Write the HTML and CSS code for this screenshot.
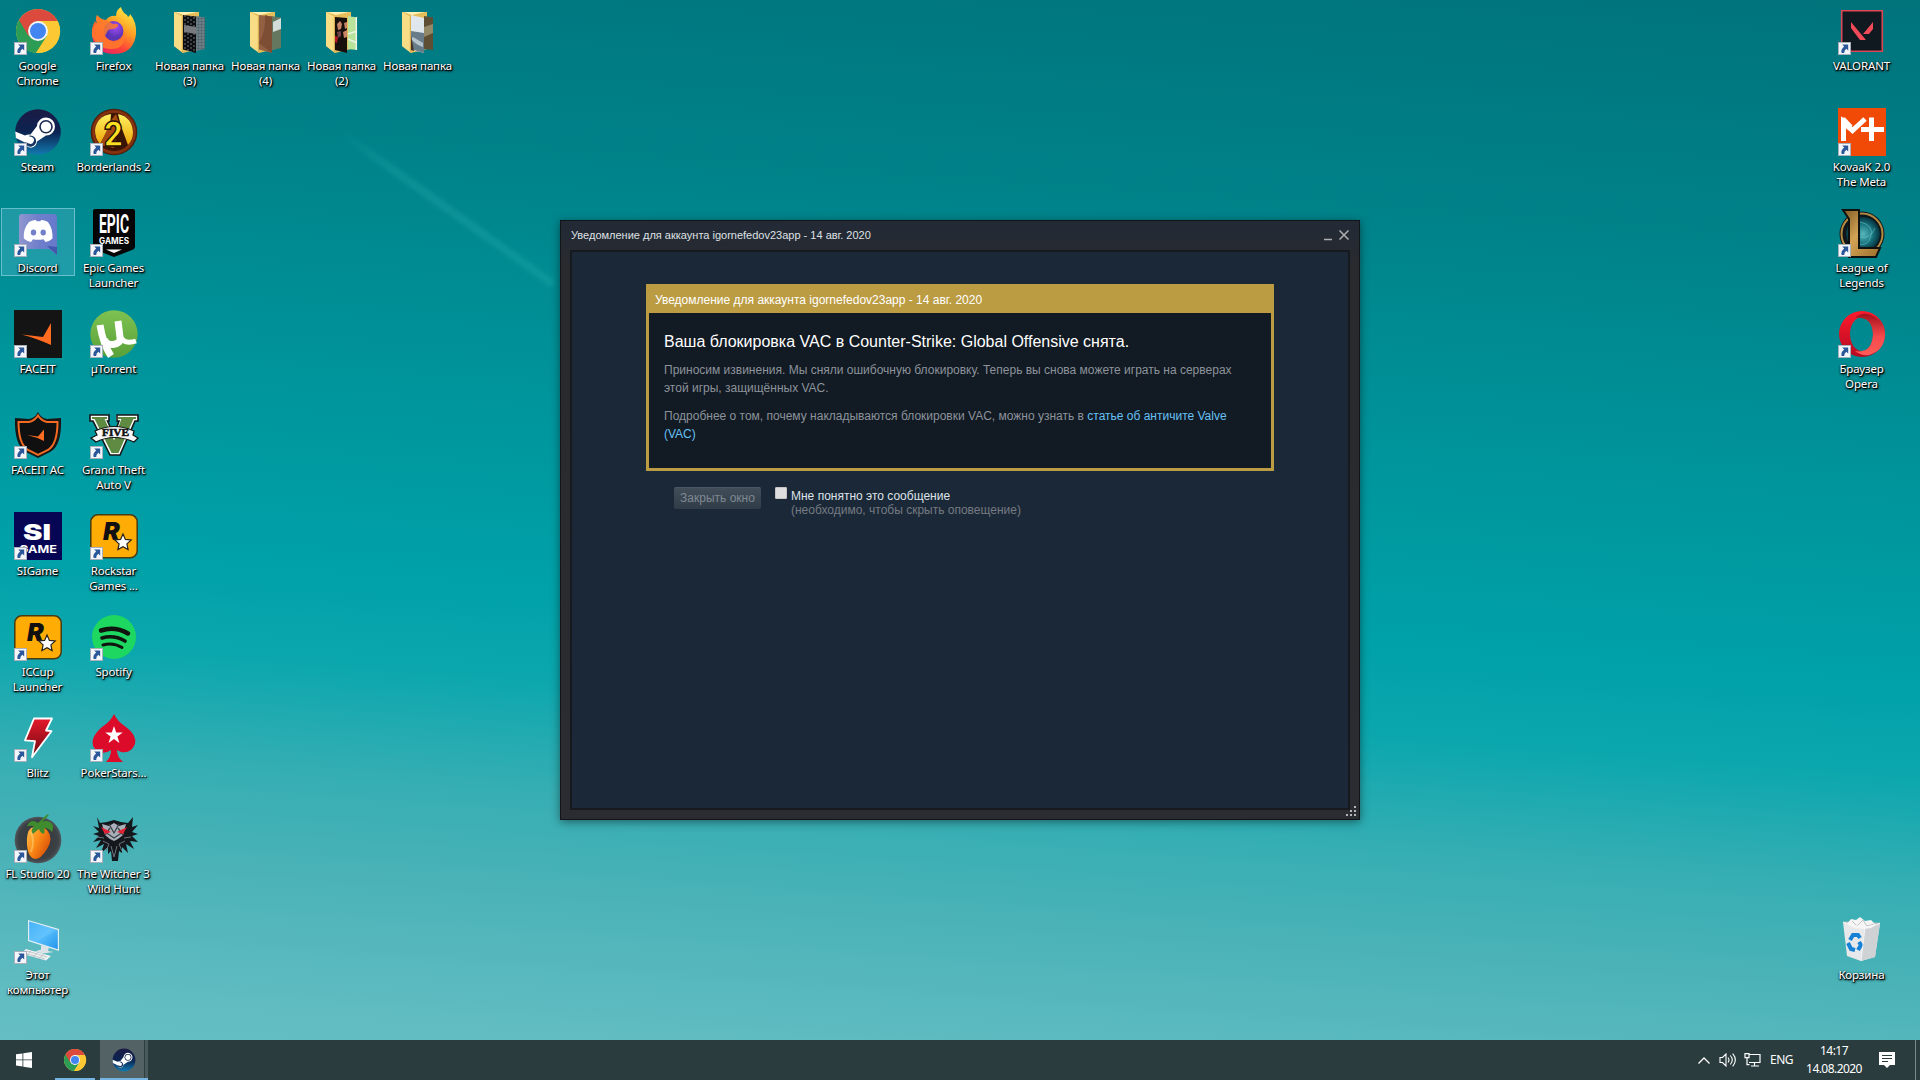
FILE: index.html
```html
<!DOCTYPE html>
<html lang="ru">
<head>
<meta charset="utf-8">
<title>Рабочий стол</title>
<link rel="stylesheet" href="styles.css">
</head>
<body>
<svg class="defs" aria-hidden="true">
  <defs>
    <linearGradient id="steamBg" x1="0" y1="0" x2="0" y2="1"><stop offset="0" stop-color="#1b1b45"/><stop offset=".5" stop-color="#0b2350"/><stop offset="1" stop-color="#1279b0"/></linearGradient>
    <linearGradient id="ffBody" x1=".8" y1="0" x2=".2" y2="1"><stop offset="0" stop-color="#fff044"/><stop offset=".4" stop-color="#ff9a22"/><stop offset=".7" stop-color="#ff4238"/><stop offset="1" stop-color="#e3206c"/></linearGradient>
    <radialGradient id="ffCore" cx=".6" cy=".3"><stop offset="0" stop-color="#a64bf5"/><stop offset="1" stop-color="#5b35b5"/></radialGradient>
    <linearGradient id="ut" x1="0" y1="0" x2="0" y2="1"><stop offset="0" stop-color="#7ec251"/><stop offset="1" stop-color="#58a039"/></linearGradient>
    <linearGradient id="blitz" x1="0" y1="0" x2="0" y2="1"><stop offset="0" stop-color="#e51a2b"/><stop offset="1" stop-color="#6d0911"/></linearGradient>
    <linearGradient id="fruit" x1="0" y1="0" x2="1" y2=".7"><stop offset="0" stop-color="#ffc04d"/><stop offset=".5" stop-color="#fb8a16"/><stop offset="1" stop-color="#d64d08"/></linearGradient>
    <radialGradient id="flBg"><stop offset="0" stop-color="#30343a"/><stop offset=".85" stop-color="#3c4146"/><stop offset="1" stop-color="#50575c"/></radialGradient>
    <linearGradient id="screen" x1="0" y1="0" x2="1" y2="1"><stop offset="0" stop-color="#2aa5f2"/><stop offset=".5" stop-color="#55bdfb"/><stop offset="1" stop-color="#2595ec"/></linearGradient>
    <linearGradient id="opera" x1="0" y1="0" x2="0" y2="1"><stop offset="0" stop-color="#ff1b2d"/><stop offset="1" stop-color="#b40a22"/></linearGradient>
    <linearGradient id="operaR" x1="0" y1="0" x2="0" y2="1"><stop offset="0" stop-color="#a5101c"/><stop offset=".55" stop-color="#f64a4c"/><stop offset="1" stop-color="#ff5b57"/></linearGradient>
    <linearGradient id="gold" x1="0" y1="0" x2="1" y2="1"><stop offset="0" stop-color="#7e5a24"/><stop offset=".45" stop-color="#d3a254"/><stop offset="1" stop-color="#9b6e2b"/></linearGradient>
    <radialGradient id="orb"><stop offset="0" stop-color="#55b8bc"/><stop offset=".6" stop-color="#17717c"/><stop offset="1" stop-color="#06323d"/></radialGradient>
    <linearGradient id="discord" x1="0" y1="0" x2="1" y2="0"><stop offset="0" stop-color="#9096cf"/><stop offset=".5" stop-color="#707fcb"/><stop offset="1" stop-color="#6579cb"/></linearGradient>
    <radialGradient id="wood"><stop offset=".6" stop-color="#4a1b06"/><stop offset=".9" stop-color="#8b3411"/><stop offset="1" stop-color="#3c1607"/></radialGradient>
    <linearGradient id="yel" x1="0" y1="0" x2="0" y2="1"><stop offset="0" stop-color="#fff160"/><stop offset="1" stop-color="#f0a70a"/></linearGradient>
    <pattern id="checks" width="6" height="4" patternUnits="userSpaceOnUse"><rect width="6" height="4" fill="#0c0d10"/><path d="M0 1h2M3 3h2" stroke="#8c8f92" stroke-width=".8"/></pattern>
    <pattern id="plaid" width="3" height="3" patternUnits="userSpaceOnUse"><rect width="3" height="3" fill="#4d6068"/><path d="M0 1h3M1 0v3" stroke="#8a9ba1" stroke-width=".6"/></pattern>

    <symbol id="arrow" viewBox="0 0 13 13"><rect x=".5" y=".5" width="12" height="12" fill="#f4f6f9" stroke="#a8b1bb"/><path d="M4.2 2.5h6v6L8.3 6.7Q6 8.4 6.2 11H3.6Q2.500 7.500 6.200 4.600z" fill="#2a5799"/></symbol>

    <symbol id="chrome" viewBox="0 0 48 48">
      <circle cx="24" cy="24" r="22" fill="#fcc934"/>
      <path d="M24 24 5 13A22 22 0 0 0 22 46l11-17z" fill="#2d9c55"/>
      <path d="M24 14h19.700A22 22 0 0 0 5 13l9.500 16z" fill="#dc4a3e"/>
      <path d="M24 14h19.700A22 22 0 0 1 22 46l11-17z" fill="#fcc934"/>
      <circle cx="24" cy="24" r="10" fill="#f3f5f6"/><circle cx="24" cy="24" r="8" fill="#4285f0"/>
    </symbol>
    <symbol id="steam" viewBox="0 0 48 48">
      <circle cx="24" cy="24" r="22.800" fill="url(#steamBg)"/>
      <path d="M1.200 23.500 11 27.600q3-1.500 5.500-1L23 18a9 9 0 1 1 9 9.500l-9 6q-.5 5.500-6 6.200-5-.2-6-5.200L1.900 30z" fill="#fff"/>
      <circle cx="32" cy="18.700" r="6.800" fill="#1a2a50"/><circle cx="32" cy="18.700" r="5.200" fill="#fff"/>
      <circle cx="32" cy="18.700" r="3.900" fill="#fff"/><path d="m11 34 3.800 1.600a3.500 3.500 0 1 0 3-6.500L14.200 28a5.600 5.600 0 1 1-3.200 6z" fill="#173661"/>
    </symbol>
    <symbol id="folder" viewBox="0 0 48 48">
      <path d="M8 5h25v37L17 46 8 39z" fill="#e5bd5a"/><path d="M9 5h22l-13 3z" fill="#fff0b5"/>
    </symbol>
    <symbol id="flap" viewBox="0 0 48 48"><path d="m8 5 9 5v36l-9-7z" fill="#f9dc86"/><path d="m15.800 9.500 1.200.6V46l-1.200-1z" fill="#d8b052"/></symbol>
    <symbol id="rockstar" viewBox="0 0 48 48">
      <rect x=".8" y="2.800" width="46.400" height="43" rx="7" fill="#ffad05" stroke="#493a12" stroke-width="1.500"/>
      <text x="13" y="27.500" class="g-rock">R</text>
      <path d="m33 22 2.400 5.400 5.800.6-4.300 3.900 1.200 5.700-5.100-2.900-5.100 2.900 1.200-5.700-4.300-3.900 5.800-.6z" fill="#fff" stroke="#26221c" stroke-width="1.200"/>
    </symbol>
  </defs>
</svg>

<main class="desktop">
  <section class="column">
    <div class="item"><div class="icon"><svg class="art"><use href="#chrome"/></svg><svg class="link"><use href="#arrow"/></svg></div><span class="label">Google<br>Chrome</span></div>
    <div class="item"><div class="icon"><svg class="art"><use href="#steam"/></svg><svg class="link"><use href="#arrow"/></svg></div><span class="label">Steam</span></div>
    <div class="item selected"><div class="icon"><svg class="art" viewBox="0 0 48 48"><path d="M8 5h32q3 0 3 3v38l-8-6H8q-3 0-3-3V8q0-3 3-3z" fill="url(#discord)"/><path d="M43 46 33 37l10 1z" fill="#4358ad"/><path d="M15 13q4-2.200 7-2l.6 1.200h3.800L27 11q3-.2 7 2 5 7 4.500 16.500-3 3-7 3.500l-2-2.800q-5.500 1-10.500 0L17 33q-4-.5-7.200-3.500Q9 20 15 13z" fill="#fff"/><ellipse cx="19.500" cy="23.500" rx="2.700" ry="3" fill="#7180c9"/><ellipse cx="29.200" cy="23.500" rx="2.700" ry="3" fill="#7180c9"/></svg><svg class="link"><use href="#arrow"/></svg></div><span class="label">Discord</span></div>
    <div class="item"><div class="icon"><svg class="art" viewBox="0 0 48 48"><path d="M0 0h48v48H0z" fill="#141414"/><path d="M8 24.500 29 27l8-14v22q-13-6-29-10.500z" fill="#ff6c21"/></svg><svg class="link"><use href="#arrow"/></svg></div><span class="label">FACEIT</span></div>
    <div class="item"><div class="icon"><svg class="art" viewBox="0 0 48 48"><path d="M24 1q3 6 9 7l14-1q1 28-11 34L24 47l-12-6Q0 34 1 7l14 1q6-1 9-7z" fill="#161616"/><path d="M24 4.500q3 5 9 6.500h10.500q0 22-9.500 28l-10 5-10-5Q4.500 33 4.500 11H15q6-1.500 9-6.500z" fill="#101010" stroke="#f36a22" stroke-width="2"/><path d="m13 24 11 1.500 6-7v11.500q-8-4-17-6z" fill="#ff6d20"/></svg><svg class="link"><use href="#arrow"/></svg></div><span class="label">FACEIT AC</span></div>
    <div class="item"><div class="icon"><svg class="art" viewBox="0 0 48 48"><path d="M0 0h48v48H0z" fill="#060655"/><text x="9" y="27.500" textLength="28" lengthAdjust="spacingAndGlyphs" class="g-si">SI</text><text x="5" y="40.500" textLength="38" lengthAdjust="spacingAndGlyphs" class="g-game">GAME</text></svg><svg class="link"><use href="#arrow"/></svg></div><span class="label">SIGame</span></div>
    <div class="item"><div class="icon"><svg class="art"><use href="#rockstar"/></svg><svg class="link"><use href="#arrow"/></svg></div><span class="label">ICCup<br>Launcher</span></div>
    <div class="item"><div class="icon"><svg class="art" viewBox="0 0 48 48"><path d="M20 4.500h18l-6 12 5.500.7-19.500 26 3-16-10-.8z" fill="url(#blitz)" stroke="#fff" stroke-width="1.800" stroke-linejoin="round"/></svg><svg class="link"><use href="#arrow"/></svg></div><span class="label">Blitz</span></div>
    <div class="item"><div class="icon"><svg class="art" viewBox="0 0 48 48"><circle cx="24" cy="25" r="23.300" fill="url(#flBg)"/><path d="M17 13q9-4 16 2 7 8 0 19-6 10-12 10-7-1-8-14-1-13 4-17z" fill="url(#fruit)"/><path d="M17 17q4 9 0 20" fill="none" stroke="#ffd77c" stroke-width="2" opacity=".5"/><path d="M24 8q-7-5-11 3 6-1 7 1-4 3-1 7 3-3 6-5 1 4 5 5 1-4 0-6 5 0 8 4 3-7-2-10-4-2-8 0l7-7-2-.5z" fill="#3f8c2e"/></svg><svg class="link"><use href="#arrow"/></svg></div><span class="label">FL Studio 20</span></div>
    <div class="item"><div class="icon"><svg class="art" viewBox="0 0 48 48"><path d="m14 4 31 9v22L14 25z" fill="#e2eef4"/><path d="m15.200 5.500 28.600 8.400v19.400L15.200 24z" fill="url(#screen)"/><path d="m15.200 5.500 28.600 8.400-23 12L15.200 24z" fill="#7bcfff" opacity=".35"/><path d="m27 29 8 2.500-1 3.500 6 1-11 1.500-8-2 6-2z" fill="#dce3e8"/><path d="m12 33 25 7-5 4.500-25-7z" fill="#f0f1f2"/><path d="m13 35 20 6M10 37l21 6M18 34l-5 5m11-3-5 5m11-3-5 5" stroke="#b6bdc2" stroke-width=".8"/></svg><svg class="link"><use href="#arrow"/></svg></div><span class="label">Этот<br>компьютер</span></div>
  </section>

  <section class="column">
    <div class="item"><div class="icon"><svg class="art" viewBox="0 0 48 48"><path d="M31 0q1 5 6 8l1 2q2-1 2-3 7 8 6 20-2 19-21 20Q5 47 2 29q-1-8 3-15 1 2 2 2-2-4 0-8 4 5 9 5 4-5 10-4 0-6 5-9z" fill="url(#ffBody)"/><circle cx="23.500" cy="24" r="10" fill="url(#ffCore)"/><path d="M2 22Q5 17 7 17q-1-4 0-9 4 5 9 5l7 4q6-1 5 2-2 3-6 3-4 0-5 3l-2 4q4 6 10 5 8 0 9-10 3 18-13 18Q8 42 2 29z" fill="#ff7b2b" opacity=".85"/></svg><svg class="link"><use href="#arrow"/></svg></div><span class="label">Firefox</span></div>
    <div class="item"><div class="icon"><svg class="art" viewBox="0 0 48 48"><circle cx="24" cy="24" r="23.300" fill="url(#wood)"/><circle cx="24" cy="24" r="19" fill="#3a1405"/><path d="M21 6Q7 8 5 22q0 9 5 14l10-18z" fill="url(#yel)"/><path d="M28 6q14 3 15 18 0 8-5 13L31 18z" fill="url(#yel)"/><path d="m10 37 12-26 4-5 3 9-5 25z" fill="#a64b10"/><text x="14" y="38" textLength="19" lengthAdjust="spacingAndGlyphs" class="g-two">2</text></svg><svg class="link"><use href="#arrow"/></svg></div><span class="label">Borderlands 2</span></div>
    <div class="item"><div class="icon"><svg class="art" viewBox="0 0 48 48"><path d="M5 0h38q2 0 2 2v35q0 3-3 4l-18 7-18-7q-3-1-3-4V2q0-2 2-2z" fill="#050505"/><text x="9" y="24" textLength="30" lengthAdjust="spacingAndGlyphs" class="g-epic">EPIC</text><text x="9" y="35" textLength="30" lengthAdjust="spacingAndGlyphs" class="g-games">GAMES</text><path d="M16 40.500h16L24 44z" fill="#fff"/></svg><svg class="link"><use href="#arrow"/></svg></div><span class="label">Epic Games<br>Launcher</span></div>
    <div class="item"><div class="icon"><svg class="art" viewBox="0 0 48 48"><circle cx="24" cy="24" r="23.700" fill="url(#ut)"/><g fill="none" stroke="#fff" stroke-width="7"><path d="M10 15q3 19 11 31"/><path d="M14 29q2 6 9 5.500 8-1 7-7L28 11"/><path d="M30 26q4 9 16 5" stroke-width="5"/></g></svg><svg class="link"><use href="#arrow"/></svg></div><span class="label">µTorrent</span></div>
    <div class="item"><div class="icon"><svg class="art" viewBox="0 0 48 48"><path d="M1 5h17v4h-2l8 18 6-18h-3V5h20v4h-3L29 43h-8L4 9H1z" fill="#5e8a42" stroke="#fff" stroke-width="1.800"/><path d="M0 4h19v6h-1.500L24 24l5-14h-2V4h21v6h-3L30 44H20L3 10H0z" fill="none" stroke="#161616" stroke-width="1.600"/><path d="M5 20q19-9 39 0l-1 4 5 3-4 4q-20-9-38 0l-5-4 6-3z" fill="#f8f8f8" stroke="#111" stroke-width="1.200"/><text x="12" y="24.500" textLength="27" lengthAdjust="spacingAndGlyphs" class="g-five">FIVE</text></svg><svg class="link"><use href="#arrow"/></svg></div><span class="label">Grand Theft<br>Auto V</span></div>
    <div class="item"><div class="icon"><svg class="art"><use href="#rockstar"/></svg><svg class="link"><use href="#arrow"/></svg></div><span class="label">Rockstar<br>Games ...</span></div>
    <div class="item"><div class="icon"><svg class="art" viewBox="0 0 48 48"><circle cx="24" cy="24" r="22" fill="#1ed760"/><g fill="none" stroke="#10140f" stroke-linecap="round"><path d="M11 17.500q14-4.500 27 3" stroke-width="4.500"/><path d="M12 25q12-3.500 23 3" stroke-width="3.600"/><path d="M13 32q10-3 19 2.500" stroke-width="3"/></g></svg><svg class="link"><use href="#arrow"/></svg></div><span class="label">Spotify</span></div>
    <div class="item"><div class="icon"><svg class="art" viewBox="0 0 48 48"><path d="M24 0q3 7 12 13 11 8 9 17-4 10-14 8l-4-2q0 7 6 12H16q5-5 5-12-7 5-14 1-6-5-4-12 2-6 9-12 9-6 12-13z" fill="#dc0b2a"/><path d="m24 12 2.200 6.500h6.500l-5.300 4 2 6.500-5.400-4-5.400 4 2-6.500-5.300-4h6.500z" fill="#fff"/></svg><svg class="link"><use href="#arrow"/></svg></div><span class="label">PokerStars...</span></div>
    <div class="item"><div class="icon"><svg class="art" viewBox="0 0 48 48"><path d="m7 2 3 6 7-1 7-2 7 2 7 1 5-6-1 10 6-2-6 7 6 2-6 2 6 6-8-1 4 8-8-5 2 9-6-6v6l-3-2-1 10h-6l-1-10-3 3v-7l-7 6 3-9-8 4 5-8-8 2 6-6-6-2 6-2-6-6 6 2z" fill="#14171c"/><path d="m12 9 7 2 5-3 5 3 7-2-3 11-5 4-4 2-4-2-5-4z" fill="#aab0b9"/><path d="m19 9 5 9 5-9M15 17l9 6 9-6M20 13l-5 7m13-7 5 7" fill="none" stroke="#3e434a" stroke-width="1.300"/><path d="m11 12 10 5-6 2zm26 0-10 5 6 2z" fill="#e31f31"/><path d="m13 26 6 3-3 7m19-10-6 3 3 7M7 22l7 1m27-1-7 1m-13 8 3 11 3-11" fill="none" stroke="#6d747e"/></svg><svg class="link"><use href="#arrow"/></svg></div><span class="label">The Witcher 3<br>Wild Hunt</span></div>
  </section>

  <section class="column"><div class="item"><div class="icon"><svg class="art" viewBox="0 0 48 48"><use href="#folder"/><path d="m30 9 9 1.500V42l-9 2z" fill="url(#plaid)"/><path d="m17 8 13 1.500V46l-13-3.500z" fill="url(#checks)"/><path d="m18 18 12 2v7l-12-2z" fill="#777b80"/><use href="#flap"/></svg></div><span class="label">Новая папка<br>(3)</span></div></section>
  <section class="column"><div class="item"><div class="icon"><svg class="art" viewBox="0 0 48 48"><use href="#folder"/><path d="m29 9 10 1.500V41l-9 2z" fill="#66775f"/><path d="m31 15 8-4v11l-8 3z" fill="#d2ddd9"/><path d="m17 8 13 1.500V46l-13-3.500z" fill="#936142"/><path d="M17 36q7-12 6-28l7 2v36z" fill="#7d4d34"/><use href="#flap"/></svg></div><span class="label">Новая папка<br>(4)</span></div></section>
  <section class="column"><div class="item"><div class="icon"><svg class="art" viewBox="0 0 48 48"><use href="#folder"/><path d="m30 9 9 1.500V43l-9-1z" fill="#b9e29a"/><path d="m30 27 9-3M30 32l9 4M38.300 10v33" stroke="#edf6e6" stroke-width="1.500"/><path d="m17 10 12 1v35l-12-3z" fill="#160f0c"/><path d="m19 17 3-3 2 3-1 5-3 1zm7-1 3-1v6l-2 1zm-1 9 4-2v7l-3 1z" fill="#c98467"/><path d="m19 25 4-1v5l-3 2z" fill="#71404a"/><path d="m17 29 3 1-1 6-2-1z" fill="#b01720"/><use href="#flap"/></svg></div><span class="label">Новая папка<br>(2)</span></div></section>
  <section class="column"><div class="item"><div class="icon"><svg class="art" viewBox="0 0 48 48"><use href="#folder"/><path d="m30 9 9 1.500V43l-9-1z" fill="#5e4e34"/><path d="m30 20 9-3v9l-9 4z" fill="#938967"/><path d="m17 8 13 3v35l-13-3.500z" fill="#dfe7ed"/><path d="m17 24 13 2v20l-13-4z" fill="#677c88"/><path d="m19 30 10 6v4q-7-2-12-8z" fill="#b5c3cb"/><path d="m17 29 3 15-3-1z" fill="#443127"/><use href="#flap"/></svg></div><span class="label">Новая папка</span></div></section>

  <section class="column column-right">
    <div class="item"><div class="icon"><svg class="art" viewBox="0 0 48 48"><path d="M3.700 3.700h40.600v40.600H3.700z" fill="#101820" stroke="#dd4655" stroke-width="1.600"/><path d="m13 15 15 18h-6L13 21zm22 0v7l-4 5h-6z" fill="#f04a59"/></svg><svg class="link"><use href="#arrow"/></svg></div><span class="label">VALORANT</span></div>
    <div class="item"><div class="icon"><svg class="art" viewBox="0 0 48 48"><path d="M0 0h48v48H0z" fill="#f04a06"/><path d="M5.500 33V14l9 8.500L27 11M33.500 9.500V33M23 21.500h23" fill="none" stroke="#fff" stroke-width="5"/><path d="M3 9.500h4l7.500 8-4 5L3 16z" fill="#fff"/></svg><svg class="link"><use href="#arrow"/></svg></div><span class="label">KovaaK 2.0<br>The Meta</span></div>
    <div class="item"><div class="icon"><svg class="art" viewBox="0 0 48 48"><circle cx="24" cy="25" r="22.500" fill="#101519"/><circle cx="24" cy="25" r="20.500" fill="none" stroke="#b38a43" stroke-width="2"/><circle cx="25" cy="25" r="17" fill="url(#orb)"/><path d="M22 13q14 3 11 14t-13 8m17-16q-5 12-15 9" fill="none" stroke="#70c8c8" opacity=".55"/><path d="M5 1h16v38h21l-4 9H11V10z" fill="url(#gold)" stroke="#0f1110" stroke-width="2"/></svg><svg class="link"><use href="#arrow"/></svg></div><span class="label">League of<br>Legends</span></div>
    <div class="item"><div class="icon"><svg class="art" viewBox="0 0 48 48"><path fill-rule="evenodd" d="M24 1a23 23 0 1 0 0 46 23 23 0 1 0 0-46zm0 6c7 0 11 8 11 17s-4 17-11 17-12-8-12-17S17 7 24 7z" fill="url(#opera)"/><path d="M17 8q5-5 13-4 17 5 17 20 0 16-16 21-8 1-14-4 17 3 18-17Q34 6 17 8z" fill="url(#operaR)"/></svg><svg class="link"><use href="#arrow"/></svg></div><span class="label">Браузер<br>Opera</span></div>
    <div class="item bin"><div class="icon"><svg class="art" viewBox="0 0 48 48"><path d="m5 6 37 1-5 34-14 4L9 40z" fill="#e7e8e9"/><path d="m27 12 15-4-5 33-14 4z" fill="#ced2d4"/><path d="m5 6 8-1 29 2-15 5z" fill="#aeb9bd"/><path d="m9 8 4-5 5 1 4-3 5 4 6-1 5 5-5 3-7 1-10-1z" fill="#f5f5f5"/><path d="m14 5 5 5 6-6 4 6 7-2" fill="none" stroke="#c0c3c5"/><g fill="none" stroke="#1581d7" stroke-width="4"><path d="m12 24 3-5h5l2 3"/><path d="m10 27 3 6 4 1"/><path d="m20 34 3-5-2-3"/></g><path d="m5 6 22 6 15-5M27 12l-4 33" fill="none" stroke="#f8f8f8" stroke-width=".8"/></svg></div><span class="label">Корзина</span></div>
  </section>
  <div class="trail"></div>
</main>

<div class="dialog">
  <header class="titlebar">
    <span>Уведомление для аккаунта igornefedov23app - 14 авг. 2020</span>
    <svg class="controls" viewBox="0 0 28 12"><path d="M0 10.500h8" stroke="#aeb0b2" stroke-width="1.500"/><path d="m15.500 1.500 9 9m0-9-9 9" stroke="#aeb0b2" stroke-width="1.500"/></svg>
  </header>
  <div class="client">
    <section class="notice">
      <h2>Уведомление для аккаунта igornefedov23app - 14 авг. 2020</h2>
      <div class="notice-body">
        <h1>Ваша блокировка VAC в Counter-Strike: Global Offensive снята.</h1>
        <p>Приносим извинения. Мы сняли ошибочную блокировку. Теперь вы снова можете играть на серверах<br>этой игры, защищённых VAC.</p>
        <p>Подробнее о том, почему накладываются блокировки VAC, можно узнать в <a>статье об античите Valve<br>(VAC)</a></p>
      </div>
    </section>
    <div class="actions">
      <div class="button">Закрыть окно</div>
      <div class="check"></div>
      <div class="confirm">Мне понятно это сообщение<br><small>(необходимо, чтобы скрыть оповещение)</small></div>
    </div>
  </div>
  <svg class="grip" viewBox="0 0 10 10"><path d="M8 0h2v2H8zM4 4h2v2H4zm4 0h2v2H8zM0 8h2v2H0zm4 0h2v2H4zm4 0h2v2H8z" fill="#b5b6b8"/></svg>
</div>

<footer class="taskbar">
  <div class="task start"><svg viewBox="0 0 16 16"><path d="M0 2.300 6.500 1.400v6.100H0zM7.300 1.200 16 0v7.500H7.300zM0 8.300h6.500v6.200L0 13.600zm7.300 0H16V16l-8.700-1.300z" fill="#fff"/></svg></div>
  <div class="task running"><svg><use href="#chrome"/></svg></div>
  <div class="task running active"><svg><use href="#steam"/></svg></div>
  <div class="tray">
    <svg class="chev" viewBox="0 0 12 7"><path d="m.5 6.500 5.500-5.500 5.500 5.500" fill="none" stroke="#fff" stroke-width="1.300"/></svg>
    <svg class="vol" viewBox="0 0 18 14"><path d="M1 4.500h2.500L7 1v12L3.500 9.500H1zM9 4.500q2 2.500 0 5M11.300 2.500q4 4.500 0 9M13.700.7q5.300 6.300 0 12.600" fill="none" stroke="#fff" stroke-width="1.100"/></svg>
    <svg class="net" viewBox="0 0 17 14"><path d="M5 1.500h11v8H5M10.500 9.500v3M7 13h8M1 .7h4v4H1zM3 4.700v7h2.500" fill="none" stroke="#fff" stroke-width="1.200"/></svg>
    <span class="lang">ENG</span>
    <span class="clock">14:17<br>14.08.2020</span>
    <svg class="msg" viewBox="0 0 16 16"><path d="M0 0h16v13h-5l-3 3-3-3H0z" fill="#fff"/><path d="M3 3.500h10M3 6.500h10M3 9.500h6" stroke="#2a3c3e" stroke-width="1.200"/></svg>
  </div>
</footer>
</body>
</html>
```

FILE: styles.css
```css
*, *::after { box-sizing: border-box; }

body {
  margin: 0;
  width: 1920px;
  height: 1080px;
  overflow: hidden;
  display: flex;
  flex-direction: column;
  position: relative;
  color: #fff;
  font-family: "Liberation Sans", Arial, sans-serif;
  background: linear-gradient(184deg, #00737b 0%, #00838a 22%, #00949b 40%, #00a1a9 56%, #0ca7ae 64%, #35aeb3 73%, #4cb3b8 82%, #5fbcc1 92%, #68bfc4 100%);
}

.defs { position: absolute; width: 0; height: 0; }

/* Desktop icons */
.desktop { display: flex; height: 1040px; }
.column { width: 76px; flex: none; display: flex; flex-direction: column; }
.column-right { margin-left: auto; margin-right: 20px; }
.item {
  height: 101px;
  flex: none;
  padding-top: 7px;
  display: flex;
  flex-direction: column;
  align-items: center;
}
.bin { margin-top: auto; margin-bottom: 30px; }
.icon { position: relative; width: 48px; height: 48px; flex: none; }
.art { display: block; width: 48px; height: 48px; overflow: visible; }
.link { position: absolute; left: 0; bottom: 0; width: 13px; height: 13px; }
.label {
  margin-top: 3px;
  margin-right: 1px;
  font: 11.500px/15px "Noto Sans", sans-serif;
  letter-spacing: -0.15px;
  text-align: center;
  white-space: nowrap;
  text-shadow: 1px 1px 1px #000, 0 1px 2px #000, 1px 1px 3px rgba(0, 0, 0, .8);
}
.selected {
  background: linear-gradient(rgba(120, 200, 225, .25), rgba(120, 200, 225, .25)) 1px 6px / 74px 68px no-repeat;
  position: relative;
}
.selected::after {
  content: "";
  position: absolute;
  left: 1px;
  top: 6px;
  width: 74px;
  height: 68px;
  border: 1px solid rgba(150, 215, 230, .6);
}

/* Contrail in the sky */
.trail {
  position: absolute;
  left: 340px;
  top: 128px;
  width: 262px;
  height: 8px;
  transform-origin: 0 50%;
  transform: rotate(35.500deg);
  background: linear-gradient(90deg, transparent, rgba(30, 165, 165, .38) 25%, rgba(30, 168, 168, .42));
  filter: blur(2px);
}

.g-rock { font: italic 900 25px Inter, sans-serif; fill: #111; }
.g-si { font: 900 22px Inter, sans-serif; fill: #fff; }
.g-game { font: 700 11px Inter, sans-serif; fill: #fff; }
.g-two { font: 900 35px Roboto, sans-serif; fill: #ffdf22; stroke: #2a1306; stroke-width: 1.500px; }
.g-epic { font: 700 25px Roboto, sans-serif; fill: #fff; }
.g-games { font: 700 8.500px Inter, sans-serif; fill: #fff; }
.g-five { font: 900 10px "Liberation Serif", serif; fill: #111; stroke: #111; stroke-width: .5px; }

/* Notification window */
.dialog {
  position: absolute;
  left: 560px;
  top: 220px;
  width: 800px;
  height: 600px;
  padding: 0 9px 9px;
  border: 1px solid #121518;
  background: linear-gradient(#222a36, #292a2e 50px, #2b2c31);
  box-shadow: 0 2px 9px rgba(0, 0, 0, .45);
  display: flex;
  flex-direction: column;
}
.titlebar {
  height: 29px;
  padding: 0 1px 2px 1px;
  display: flex;
  align-items: center;
  justify-content: space-between;
  font-size: 11px;
  color: #dfe1e4;
}
.controls { width: 28px; height: 12px; margin-right: -3px; }
.client {
  flex: 1;
  padding: 32px 74px 0;
  border: 2px solid #16191d;
  background: #1b2838;
}
.notice { height: 187px; border: 3px solid #bb9c43; background: #121a23; }
.notice h2 {
  margin: 0;
  height: 26px;
  padding: 0 6px;
  background: #bb9c43;
  font-size: 12px;
  line-height: 27px;
  font-weight: 400;
}
.notice-body { padding: 19px 15px 0; }
.notice h1 { margin: 0 0 9px; font-size: 16px; line-height: 20px; font-weight: 400; }
.notice p { margin: 0 0 10px; font-size: 12px; line-height: 18px; color: #8c939b; white-space: nowrap; }
.notice a { color: #67c1f5; }
.actions { display: flex; padding: 16px 0 0 28px; }
.button {
  width: 87px;
  height: 22px;
  border-radius: 2px;
  border-top: 1px solid #4b5863;
  background: linear-gradient(#414d58, #303c48);
  color: #7f8992;
  font-size: 12px;
  line-height: 21px;
  text-align: center;
}
.check {
  width: 12px;
  height: 12px;
  margin-left: 14px;
  border: 1px solid #c5c5c5;
  border-radius: 1px;
  background: #dedede;
}
.confirm { margin: 2px 0 0 4px; font-size: 12px; line-height: 14px; color: #dde2e7; }
.confirm small { font-size: 12px; color: #757b81; }
.grip { position: absolute; right: 3px; bottom: 3px; width: 10px; height: 10px; }

/* Taskbar */
.taskbar { height: 40px; display: flex; background: #2a3c3e; }
.task { width: 40px; display: flex; align-items: center; justify-content: center; }
.task svg { width: 24px; height: 24px; }
.start { width: 48px; margin-right: 7px; }
.start svg { width: 16px; height: 16px; }
.running { border-bottom: 2px solid #76b4e4; padding-top: 2px; }
.active {
  width: 48px;
  margin-left: 5px;
  background: linear-gradient(90deg, #536264 44px, #2d3e40 44px, #2d3e40 45px, #4a595b 45px);
}
.tray {
  margin-left: auto;
  display: flex;
  align-items: center;
  padding-right: 20px;
  margin-right: 4px;
  border-right: 1px solid #7d898a;
  font: 12px/18px "Noto Sans", sans-serif;
}
.chev { width: 12px; height: 7px; margin-right: 9px; }
.vol { width: 18px; height: 14px; margin-right: 7px; }
.net { width: 17px; height: 14px; margin-right: 9px; }
.lang { width: 23px; letter-spacing: -.5px; }
.clock { width: 60px; margin: 0 15px 0 11px; text-align: center; letter-spacing: -.55px; white-space: nowrap; }
.msg { width: 16px; height: 16px; }
```
